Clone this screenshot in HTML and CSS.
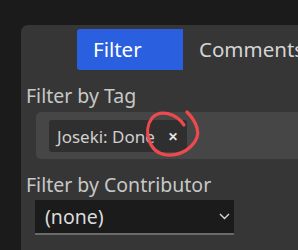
FILE: index.html
```html
<!DOCTYPE html>
<html lang="en">
<head>
    <meta charset="UTF-8">
    <meta name="viewport" content="width=device-width, initial-scale=1.0">
    <title>Filter</title>
    <link rel="stylesheet" href="styles.css">
</head>
<body>

<div class="panel">
    <!-- Tabs -->
    <div class="tabs">
        <div class="tab active">Filter</div>
        <div class="tab">Comments</div>
    </div>

    <div class="field">
        <div class="label">Filter by Tag</div>
        <div class="tag-box">
            <span class="chip">Joseki: Done <span class="chip-x">&#x2715;</span></span>
        </div>
    </div>

    <div class="field">
        <div class="label">Filter by Contributor</div>
        <div class="select">
            <span>(none)</span>
            <svg class="chevron" width="11" height="7" viewBox="0 0 11 7"><path d="M1 1 L5.5 5.5 L10 1" fill="none" stroke="#d8d8d8" stroke-width="1.4"/></svg>
        </div>
    </div>

    <!-- hand drawn annotation -->
    <svg class="scribble" width="298" height="250" viewBox="0 0 298 250">
        <path d="M184 125 C176 113 160 109 152 118 C143 130 148 153 167 155 C186 156 201 141 197 128 C195 121 191 116 187 112" fill="none" stroke="#ee4a4e" stroke-width="3.2" stroke-linecap="round"/>
    </svg>
</div>

</body>
</html>
```

FILE: styles.css
```css
body {
    margin: 0;
    background-color: #1b1b1b;
    font-family: "Noto Sans", sans-serif;
    width: 298px;
    height: 250px;
    overflow: hidden;
}

.panel {
    margin: 25px 0 0 21px;
    height: 225px;
    background-color: #363636;
    border-top-left-radius: 7px;
    padding-top: 4px;
    box-sizing: border-box;
}

.tabs {
    display: flex;
    padding-left: 56px;
    height: 41px;
}

.tab {
    flex-shrink: 0;
    padding: 0 16px;
    font-size: 20.5px;
    line-height: 41px;
    color: #d4d4d4;
    white-space: nowrap;
}

.tab.active {
    width: 106px;
    box-sizing: border-box;
    background-color: #2a5fe0;
    color: #ffffff;
    border-radius: 3px 0 0 3px;
}

.field {
    padding-left: 5px;
}

.label {
    font-size: 19.5px;
    color: #c8c8c8;
    margin-top: 14px;
    line-height: 24px;
}

.tag-box {
    margin: 4px 0 0 10px;
    height: 47px;
    background-color: #464646;
    border-radius: 5px 0 0 5px;
    padding: 8px 0 0 13px;
    box-sizing: border-box;
}

.chip {
    display: inline-flex;
    align-items: center;
    height: 32px;
    width: 138px;
    box-sizing: border-box;
    padding-left: 8px;
    background-color: #2f2f2f;
    border-radius: 3px;
    font-size: 17px;
    color: #d0d0d0;
    white-space: nowrap;
}

.chip-x {
    margin-left: 13px;
    font-size: 12px;
    font-weight: bold;
    color: #e8e8e8;
}

.select {
    margin: 3px 0 0 9px;
    width: 199px;
    height: 35px;
    background-color: #1b1b1b;
    border-bottom: 2px solid #6a6a6a;
    box-sizing: border-box;
    display: flex;
    align-items: center;
    justify-content: space-between;
    padding: 0 4px 0 10px;
    font-size: 19.5px;
    color: #dcdcdc;
}

.scribble {
    position: absolute;
    left: 0;
    top: 0;
    pointer-events: none;
}
```
